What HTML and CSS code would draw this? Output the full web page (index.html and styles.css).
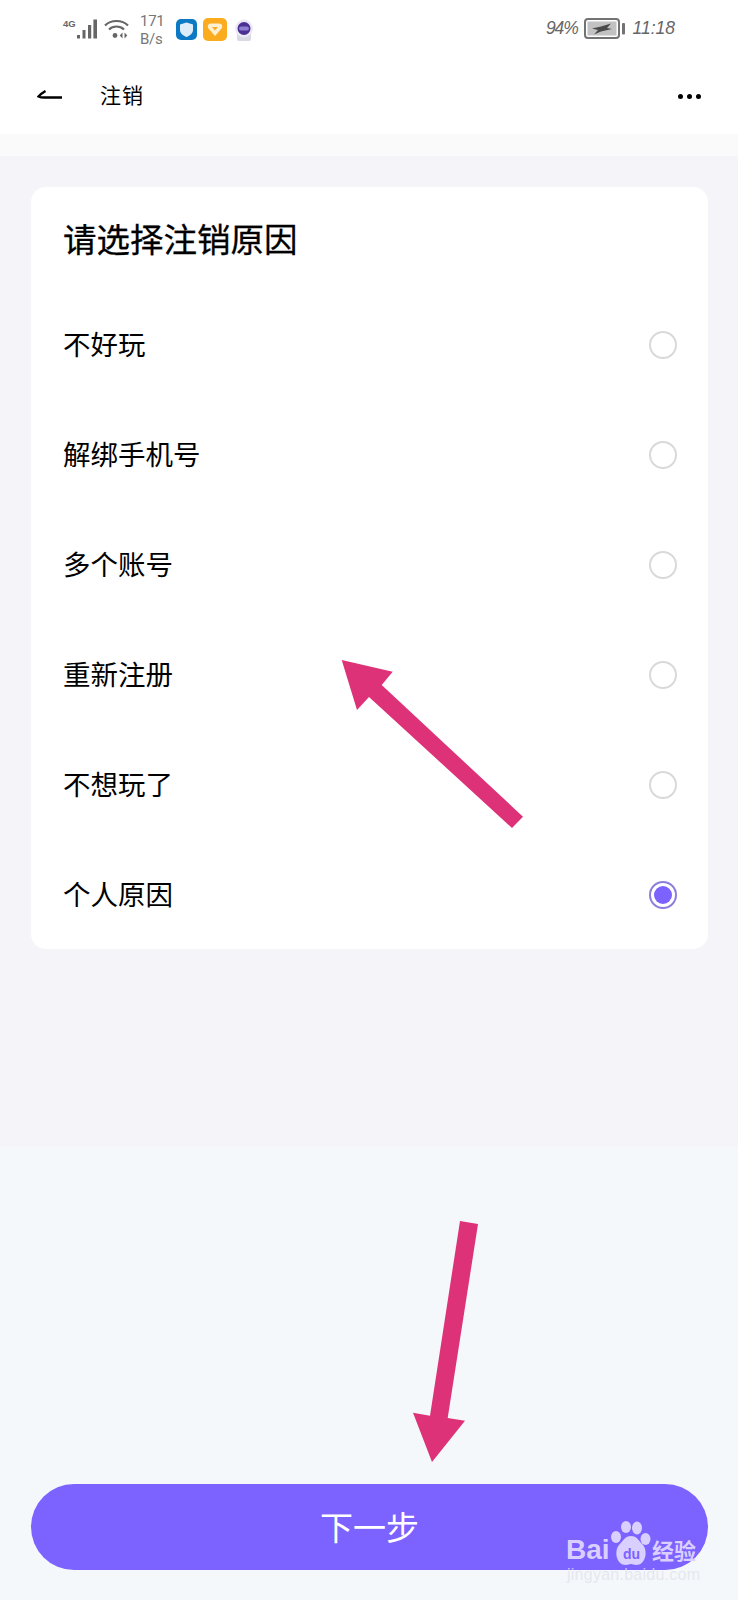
FILE: index.html
```html
<!DOCTYPE html>
<html lang="zh">
<head>
<meta charset="utf-8">
<title>注销</title>
<link rel="stylesheet" href="styles.css">
</head>
<body>
<div class="page">
  <header class="top">
    <div class="status">
      <div class="status-left">
        <span class="net">4G</span>
        <svg class="signal" width="22" height="20" viewBox="0 0 22 20"><g fill="#666"><rect x="2" y="16" width="3" height="3.500"/><rect x="7.500" y="11" width="3" height="8.500"/><rect x="13" y="6" width="3.200" height="13.500"/><rect x="18.400" y="0.500" width="3.600" height="19"/></g></svg>
        <svg class="wifi" width="25" height="20" viewBox="0 0 25 20"><g fill="none" stroke="#666" stroke-width="2.200"><path d="M1 6.500C7 0.500 18 0.500 24 6.500"/><path d="M5 10.500C9 6.500 16 6.500 20 10.500"/></g><circle cx="11" cy="16.500" r="2.400" fill="#666"/><path d="M18.500 13.500v6l-2.800-3zM20.500 13.500v6l2.800-3z" fill="#666"/></svg>
        <span class="speed">171<br>B/s</span>
        <svg class="app app-blue" width="21" height="21" viewBox="0 0 21 21"><rect width="21" height="21" rx="5" fill="#0b79c4"/><path d="M10.500 3.500l6.500 2v5.500c0 3.500-3 5.500-6.500 7-3.500-1.500-6.500-3.500-6.500-7V5.500z" fill="#dcecf8"/></svg>
        <svg class="app app-gold" width="24" height="23" viewBox="0 0 24 23"><rect width="24" height="23" rx="5" fill="#fbac1e"/><path d="M8 5.500h8c3 0 4 3 2.500 5L12 18l-6.500-7.500C4 8.500 5 5.500 8 5.500z" fill="#fdf0d2"/><path d="M9 9h6l-3 3.500z" fill="#fbac1e"/></svg>
        <svg class="app app-round" width="18" height="22" viewBox="0 0 18 22"><path d="M2 12h14v8a2 2 0 0 1-2 2H4a2 2 0 0 1-2-2z" fill="#d9d9e3"/><circle cx="9" cy="9.500" r="9" fill="#ece9f4"/><circle cx="9" cy="9.500" r="6.500" fill="#4c2f94"/><rect x="4" y="7.500" width="10" height="4" rx="2" fill="#8f7fd0"/></svg>
      </div>
      <div class="status-right">
        <span class="stat-text stat-pct">94%</span>
        <svg class="battery" width="41" height="21" viewBox="0 0 41 21"><rect x="1" y="1" width="34" height="19" rx="3" fill="none" stroke="#737373" stroke-width="2"/><rect x="3.500" y="3.500" width="29" height="14" fill="#c2c2c2"/><path d="M8 10.500L17 8.500 27 5.500 23 10 28 11 17 13.500 10 16.500 14 12z" fill="#4a4a4a"/><rect x="38" y="5" width="3" height="11.500" rx="1" fill="#737373"/></svg>
        <span class="stat-text">11:18</span>
      </div>
    </div>
    <nav class="nav">
      <svg class="back" width="26" height="10" viewBox="0 0 26 10"><path d="M8.500 1C6 2.500 3.500 4 1.500 6.500c3 1.500 5 1 9 1h14.500" fill="none" stroke="#000" stroke-width="2.400"/></svg>
      <span class="nav-title">注销</span>
      <span class="more"><i></i><i></i><i></i></span>
    </nav>
  </header>
  <div class="strip"></div>
  <main class="main">
    <section class="card">
      <h1 class="card-title">请选择注销原因</h1>
      <div class="row"><span class="label">不好玩</span><span class="radio"></span></div>
      <div class="row"><span class="label">解绑手机号</span><span class="radio"></span></div>
      <div class="row"><span class="label">多个账号</span><span class="radio"></span></div>
      <div class="row"><span class="label">重新注册</span><span class="radio"></span></div>
      <div class="row"><span class="label">不想玩了</span><span class="radio"></span></div>
      <div class="row"><span class="label">个人原因</span><span class="radio on"></span></div>
    </section>
  </main>
  <footer class="bottom">
    <button class="next">下一步</button>
  </footer>
  <svg class="arrows" width="738" height="1600" viewBox="0 0 738 1600">
    <path d="M341.700 660L392.700 671.700 381.700 685 523 816.700 512 828 369 697 357 710z" fill="#dd3278"/>
    <path d="M460 1221L478 1224 447.700 1418 465 1420.700 432 1462 413 1412.700 430 1415.700z" fill="#dd3278"/>
  </svg>
  <div class="mark">
    <div class="mark-top">
      <span class="mark-bai">Bai</span>
      <svg class="paw" width="40" height="44" viewBox="0 0 40 44"><g fill="#d9d0ff"><ellipse cx="5" cy="16" rx="5" ry="6"/><ellipse cx="15" cy="6" rx="5" ry="6"/><ellipse cx="26" cy="7" rx="5" ry="6.500"/><ellipse cx="34.500" cy="18" rx="5" ry="6"/><path d="M20 15c6 0 8 5 12 9 5 6 3 20-7 20-2 0-3-1-5-1s-3 1-5 1C5 44 3 30 8 24c4-4 6-9 12-9z"/></g><text x="20.500" y="38" class="paw-du">du</text></svg>
      <span class="mark-cn">经验</span>
    </div>
    <div class="mark-url">jingyan.baidu.com</div>
  </div>
</div>
</body>
</html>
```

FILE: styles.css
```css
* { box-sizing: border-box; }
html, body { margin: 0; padding: 0; }
body { font-family: "Noto Sans CJK SC", "Noto Sans", sans-serif; background: #f5f8fa; color: #000; }
.page { position: relative; width: 738px; height: 1600px; overflow: hidden; display: flex; flex-direction: column; }

.top { height: 134px; background: #fff; flex: none; }
.status { height: 62px; padding: 0 63px; display: flex; justify-content: space-between; align-items: flex-start; }
.status-left { display: flex; align-items: flex-start; height: 62px; }
.status-right { display: flex; align-items: center; height: 21px; margin-top: 18px; }
.net { font: bold 9.500px/9px "Liberation Sans", sans-serif; color: #666; margin-top: 19px; width: 12px; }
.signal { margin-top: 18.500px; }
.wifi { margin-top: 18.500px; margin-left: 7px; }
.speed { font: 15px/18px Roboto, sans-serif; color: #777; width: 36px; margin-left: 11px; margin-top: 12px; letter-spacing: -.3px; }
.app { margin-top: 19px; }
.app-gold { margin-left: 6px; margin-top: 18px; }
.app-round { margin-left: 8px; }
.stat-text { font: italic 17.500px/21px "Liberation Sans", sans-serif; color: #666; }
.stat-pct { letter-spacing: -1.200px; }
.status-right .battery { margin: 0 8px 0 6px; }

.nav { height: 64px; display: flex; align-items: center; padding: 0 37px; }
.back { margin-top: 2px; flex: none; }
.nav-title { font-size: 21px; line-height: 30px; margin-left: 37px; letter-spacing: 1px; }
.more { margin-left: auto; margin-top: 4px; display: flex; gap: 4px; }
.more i { width: 5px; height: 5px; border-radius: 50%; background: #000; display: block; }

.strip { height: 22px; background: #fafafa; flex: none; }
.main { height: 991px; background: #f4f4f9; padding: 31px 30px 0 31px; flex: none; }
.card { background: #fff; border-radius: 15px; height: 762px; }
.card-title { margin: 0; height: 102.500px; padding: 0 32px; font-size: 33.500px; line-height: 102px; font-weight: 400; -webkit-text-stroke: .3px #000; }
.row { height: 110px; padding: 0 31px 0 32px; display: flex; align-items: center; justify-content: space-between; font-size: 27.500px; line-height: 40px; }
.label { margin-bottom: 3px; }
.radio { width: 28px; height: 28px; border-radius: 50%; border: 2px solid #d9d9d9; background: #fff; display: flex; align-items: center; justify-content: center; }
.radio.on { border-color: #8b7edc; }
.radio.on::after { content: ""; width: 18px; height: 18px; border-radius: 50%; background: #7c62ff; }

.bottom { flex: 1; padding: 337px 30px 0 31px; }
.next { display: block; width: 677px; height: 86px; border: 0; border-radius: 43px; background: #7c62ff; color: #fff; font: 33px/84px "Noto Sans CJK SC", sans-serif; padding: 0 0 2px; }

.arrows { position: absolute; left: 0; top: 0; pointer-events: none; }
.mark { position: absolute; left: 566px; top: 1521px; width: 134px; color: #d9d0ff; }
.mark-top { display: flex; align-items: flex-end; height: 44px; }
.mark-bai { font: bold 28px/24px "Liberation Sans", sans-serif; width: 45px; margin-bottom: 3px; }
.paw { flex: none; }
.paw-du { font: bold 14px "Liberation Sans", sans-serif; fill: #7c62ff; text-anchor: middle; }
.mark-cn { font-size: 22px; line-height: 24px; margin-left: 1px; font-weight: 700; margin-bottom: 4px; white-space: nowrap; }
.mark-url { font: 16px/16px "Liberation Sans", sans-serif; color: rgba(225, 225, 235, .75); margin-top: 2px; margin-left: 1px; white-space: nowrap; letter-spacing: .25px; }
```
